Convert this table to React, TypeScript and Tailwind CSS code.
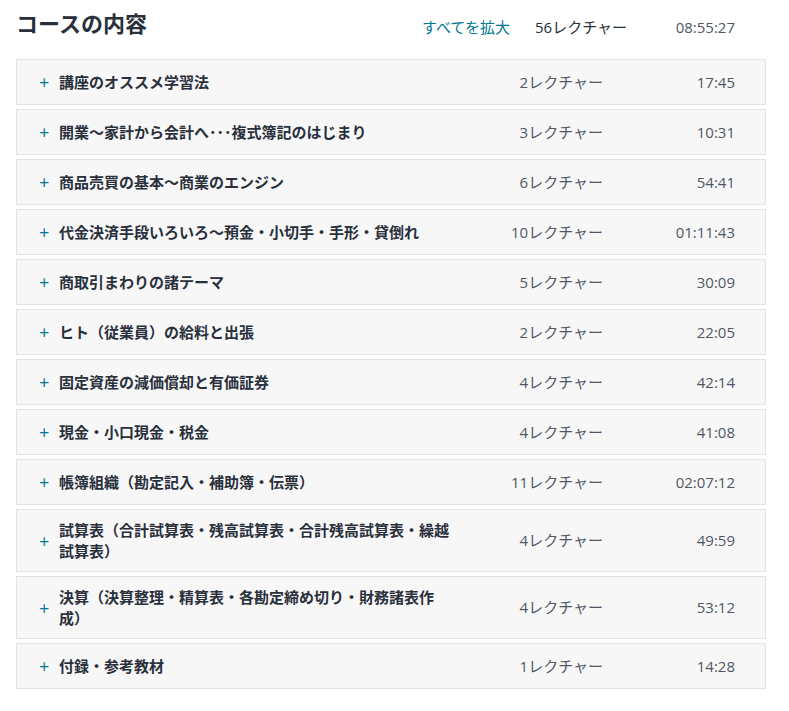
const sections = [
  { title: "講座のオススメ学習法", count: "2レクチャー", time: "17:45" },
  { title: "開業〜家計から会計へ･･･複式簿記のはじまり", count: "3レクチャー", time: "10:31" },
  { title: "商品売買の基本〜商業のエンジン", count: "6レクチャー", time: "54:41" },
  { title: "代金決済手段いろいろ〜預金・小切手・手形・貸倒れ", count: "10レクチャー", time: "01:11:43" },
  { title: "商取引まわりの諸テーマ", count: "5レクチャー", time: "30:09" },
  { title: "ヒト（従業員）の給料と出張", count: "2レクチャー", time: "22:05" },
  { title: "固定資産の減価償却と有価証券", count: "4レクチャー", time: "42:14" },
  { title: "現金・小口現金・税金", count: "4レクチャー", time: "41:08" },
  { title: "帳簿組織（勘定記入・補助簿・伝票）", count: "11レクチャー", time: "02:07:12" },
  { title: "試算表（合計試算表・残高試算表・合計残高試算表・繰越試算表）", count: "4レクチャー", time: "49:59" },
  { title: "決算（決算整理・精算表・各勘定締め切り・財務諸表作成）", count: "4レクチャー", time: "53:12" },
  { title: "付録・参考教材", count: "1レクチャー", time: "14:28" }
]

function SectionRow({ title, count, time }: { title: string; count: string; time: string }) {
  return (
    <div className="flex items-center min-h-[46px] py-[9.5px] pl-[22px] pr-[30px] bg-[#f7f7f8] border border-[#e2e3e4]">
      <span className="w-[20px] text-[18px] leading-[20px] text-[#007791] font-medium">+</span>
      <span className="w-[392px] text-[15px] leading-[21px] font-bold text-[#29303b]">{title}</span>
      <span className="flex-1 text-right text-[15px] leading-[21px] text-[#505763]">{count}</span>
      <span className="w-[132px] text-right text-[15px] leading-[21px] text-[#505763]">{time}</span>
    </div>
  )
}

export default function App() {
  return (
    <div
      className="w-[789px] h-[711px] bg-white px-[16px]"
      style={{ fontFamily: '"Open Sans", "Noto Sans CJK JP", sans-serif' }}
    >
      <div className="flex items-start w-[750px] pt-[8px] mb-[21px] pr-[31px]">
        <h2 className="flex-1 text-[22px] leading-[30px] font-bold text-[#29303b]">コースの内容</h2>
        <div className="flex pt-[8px] text-[15px] leading-[22px]">
          <span className="text-[#007791]">すべてを拡大</span>
          <span className="w-[117px] text-right text-[#29303b]">56レクチャー</span>
          <span className="w-[108px] text-right text-[#505763]">08:55:27</span>
        </div>
      </div>
      <div className="flex flex-col gap-[4px] w-[750px]">
        {sections.map((s) => (
          <SectionRow key={s.title} {...s} />
        ))}
      </div>
    </div>
  )
}
